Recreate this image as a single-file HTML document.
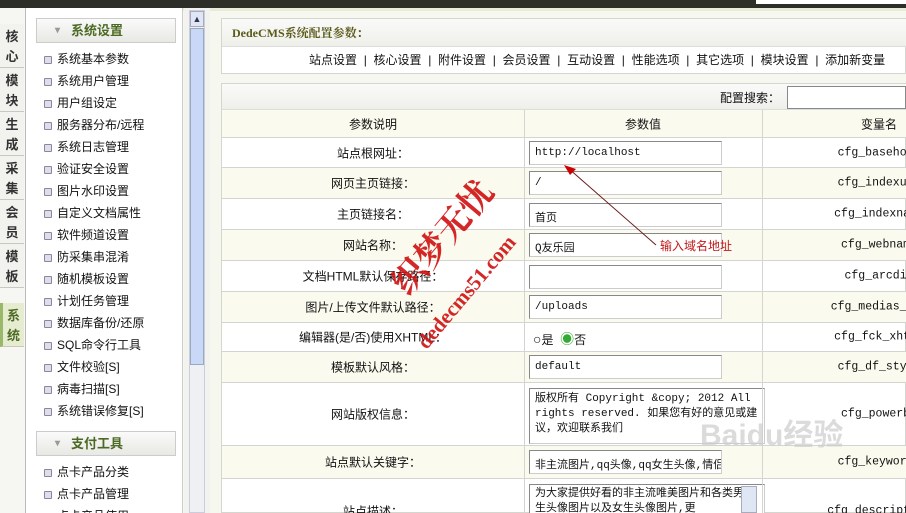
<!DOCTYPE html>
<html style="width:906px;height:513px;overflow:hidden"><head><meta charset="utf-8"><style>
*{margin:0;padding:0;box-sizing:border-box}
body{width:906px;height:513px;overflow:hidden;background:#f6f8f0;font-family:"Liberation Sans","Noto Sans CJK SC","WenQuanYi Zen Hei",sans-serif;font-size:12px;color:#111;position:relative}
.a{position:absolute}
.tab{position:absolute;left:0;width:24px;height:44px;background:#f2f2ee;border-bottom:1px solid #c8c8c0;font-weight:bold;font-size:13px;color:#333;text-align:center;line-height:20px;padding-top:3px}
.side{position:absolute;left:25px;top:8px;width:158px;height:505px;background:#fff;border-left:1px solid #bbb;border-right:1px solid #ccc;overflow:hidden}
.hd{position:absolute;left:10px;width:140px;height:25px;border:1px solid #ccc;background:linear-gradient(#fafafa,#e8e8e4);font-weight:bold;font-size:13px;color:#4c6a23;line-height:23px;padding-left:34px}
.hd:before{content:"▾";position:absolute;left:18px;color:#999;font-size:10px}
.it{position:absolute;left:18px;font-size:12px;line-height:22px;padding-left:13px;white-space:nowrap}
.it:before{content:"";position:absolute;left:0;top:8px;width:6px;height:6px;border:1px solid #889;background:#dde;border-radius:1px}
.row{position:absolute;left:222px;width:684px;border-bottom:1px solid #d4d4d0;overflow:hidden}
.c1{position:absolute;left:0;width:302px;text-align:center;top:50%;transform:translateY(-50%)}
.c3{position:absolute;left:540px;width:234px;text-align:center;top:50%;transform:translateY(-50%);font-family:"Liberation Mono",monospace;font-size:11.5px;white-space:nowrap}
.vl{position:absolute;top:110px;height:403px;width:1px;background:#d4d4d0}
.in{position:absolute;left:307px;width:193px;height:24px;border:1px solid #888;border-right-color:#ccc;border-bottom-color:#ccc;background:#fff;font-family:"Liberation Mono","Noto Sans CJK SC",monospace;font-size:11px;padding:5px 5px;white-space:nowrap;overflow:hidden}
.be{background:#fafaee}
.sp{display:inline-block;width:16.5px;text-align:center}
</style></head><body>
<div class="a" style="left:0;top:0;width:906px;height:8px;background:#2e2e28"></div>
<div class="a" style="left:756px;top:0;width:150px;height:4px;background:#fff"></div>
<div class="a" style="left:0;top:8px;width:906px;height:3px;background:#e6ecd8"></div>
<div class="a" style="left:0;top:8px;width:25px;height:505px;background:#f6f6f2"></div>
<div class="tab" style="top:24px">核<br>心</div>
<div class="tab" style="top:68px">模<br>块</div>
<div class="tab" style="top:112px">生<br>成</div>
<div class="tab" style="top:156px">采<br>集</div>
<div class="tab" style="top:200px">会<br>员</div>
<div class="tab" style="top:244px">模<br>板</div>
<div class="tab" style="top:303px;background:#e6ecd0;color:#4c6a23;border-left:3px solid #9ab86a">系<br>统</div>
<div class="side">
<div class="hd" style="top:10px">系统设置</div>
<div class="it" style="top:40px">系统基本参数</div>
<div class="it" style="top:62px">系统用户管理</div>
<div class="it" style="top:84px">用户组设定</div>
<div class="it" style="top:106px">服务器分布/远程</div>
<div class="it" style="top:128px">系统日志管理</div>
<div class="it" style="top:150px">验证安全设置</div>
<div class="it" style="top:172px">图片水印设置</div>
<div class="it" style="top:194px">自定义文档属性</div>
<div class="it" style="top:216px">软件频道设置</div>
<div class="it" style="top:238px">防采集串混淆</div>
<div class="it" style="top:260px">随机模板设置</div>
<div class="it" style="top:282px">计划任务管理</div>
<div class="it" style="top:304px">数据库备份/还原</div>
<div class="it" style="top:326px">SQL命令行工具</div>
<div class="it" style="top:348px">文件校验[S]</div>
<div class="it" style="top:370px">病毒扫描[S]</div>
<div class="it" style="top:392px">系统错误修复[S]</div>
<div class="hd" style="top:423px">支付工具</div>
<div class="it" style="top:453px">点卡产品分类</div>
<div class="it" style="top:475px">点卡产品管理</div>
<div class="it" style="top:497px">点卡产品使用</div>
</div>
<div class="a" style="left:184px;top:8px;width:26px;height:505px;background:#f2f2ee"></div>
<div class="a" style="left:189px;top:10px;width:16px;height:503px;background:#eef0f4;border:1px solid #ccd"></div>
<div class="a" style="left:190px;top:11px;width:14px;height:16px;background:#dfe6f4;border:1px solid #aab;font-size:9px;text-align:center;line-height:14px;color:#335">▲</div>
<div class="a" style="left:190px;top:28px;width:14px;height:337px;background:#c8d8f6;border:1px solid #9ab"></div>
<div class="a" style="left:221px;top:18px;width:685px;height:56px;border:1px solid #d6d6d0;background:#fff"></div>
<div class="a" style="left:222px;top:19px;width:684px;height:28px;background:linear-gradient(#fafafa,#efefea);border-bottom:1px solid #ddd;font-family:'Liberation Serif','Noto Serif CJK SC',serif;font-weight:bold;color:#5a5a1a;font-size:12px;line-height:28px;padding-left:10px">DedeCMS系统配置参数：</div>
<div class="a" style="left:309px;top:48px;font-size:12px;line-height:24px;white-space:nowrap">站点设置<span class="sp">|</span>核心设置<span class="sp">|</span>附件设置<span class="sp">|</span>会员设置<span class="sp">|</span>互动设置<span class="sp">|</span>性能选项<span class="sp">|</span>其它选项<span class="sp">|</span>模块设置<span class="sp">|</span>添加新变量</div>
<div class="a" style="left:221px;top:83px;width:685px;height:430px;border:1px solid #d6d6d0;background:#fff"></div>
<div class="a" style="left:222px;top:84px;width:684px;height:26px;background:linear-gradient(#fafafa,#efefea);border-bottom:1px solid #ddd"></div>
<div class="a" style="left:720px;top:89px;font-size:12px">配置搜索：</div>
<div class="a" style="left:787px;top:86px;width:119px;height:23px;border:1px solid #888;background:#fff"></div>
<div class="row be" style="top:110px;height:28px"><div class="c1">参数说明</div><div class="c1" style="left:302px;width:238px">参数值</div><div class="c3" style="font-family:inherit;font-size:12px">变量名</div></div>
<div class="row" style="top:138px;height:30px"><div class="c1">站点根网址：</div><div class="in" style="top:3px">http://localhost</div><div class="c3">cfg_basehost</div></div>
<div class="row be" style="top:168px;height:31px"><div class="c1">网页主页链接：</div><div class="in" style="top:3px">/</div><div class="c3">cfg_indexurl</div></div>
<div class="row" style="top:199px;height:31px"><div class="c1">主页链接名：</div><div class="in" style="top:4px">首页</div><div class="c3">cfg_indexname</div></div>
<div class="row be" style="top:230px;height:31px"><div class="c1">网站名称：</div><div class="in" style="top:3px">Q友乐园</div><div class="c3">cfg_webname</div></div>
<div class="row" style="top:261px;height:31px"><div class="c1">文档HTML默认保存路径：</div><div class="in" style="top:4px"></div><div class="c3">cfg_arcdir</div></div>
<div class="row be" style="top:292px;height:31px"><div class="c1">图片/上传文件默认路径：</div><div class="in" style="top:3px">/uploads</div><div class="c3">cfg_medias_dir</div></div>
<div class="row" style="top:323px;height:29px"><div class="c1">编辑器(是/否)使用XHTML：</div><div class="a" style="left:311px;top:6px;font-size:12px"><span style="font-size:14px">○</span>是 &nbsp;<span style="color:#3a3;font-size:14px">◉</span>否</div><div class="c3">cfg_fck_xhtml</div></div>
<div class="row be" style="top:352px;height:31px"><div class="c1">模板默认风格：</div><div class="in" style="top:3px">default</div><div class="c3">cfg_df_style</div></div>
<div class="row" style="top:383px;height:63px"><div class="c1">网站版权信息：</div><div class="in" style="top:5px;width:236px;height:56px;white-space:normal;line-height:15px;padding:3px 5px">版权所有 Copyright &amp;copy; 2012 All rights reserved. 如果您有好的意见或建议，欢迎联系我们</div><div class="c3">cfg_powerby</div></div>
<div class="row be" style="top:446px;height:33px"><div class="c1">站点默认关键字：</div><div class="in" style="top:4px">非主流图片,qq头像,qq女生头像,情侣</div><div class="c3">cfg_keywords</div></div>
<div class="row" style="top:479px;height:34px;border-bottom:none"><div class="c1" style="top:32px">站点描述：</div><div class="in" style="top:5px;width:236px;height:40px;white-space:normal;line-height:15px;padding:2px 20px 2px 5px">为大家提供好看的非主流唯美图片和各类男生头像图片以及女生头像图片,更</div><div class="c3" style="top:32px">cfg_description</div></div>
<div class="vl" style="left:524px"></div><div class="vl" style="left:762px"></div>
<div class="a" style="left:741px;top:486px;width:16px;height:27px;background:#dfe6f4;border:1px solid #aab"></div>
<svg class="a" style="left:560px;top:160px" width="120" height="100"><line x1="8" y1="8" x2="96" y2="85" stroke="#6a1a1a" stroke-width="1"/><polygon points="4,5 16,9 10,15" fill="#c00"/></svg>
<div class="a" style="left:660px;top:237px;color:#c01818;font-size:12px">输入域名地址</div>
<div class="a" style="left:378px;top:272px;transform:rotate(-50deg);transform-origin:left top;color:#d01010;font-family:'Liberation Serif','Noto Serif CJK SC',serif;font-weight:bold;font-size:34px;white-space:nowrap;opacity:.9">织梦无忧</div>
<div class="a" style="left:412px;top:338px;transform:rotate(-50deg);transform-origin:left top;color:#d01010;font-family:'Liberation Serif',serif;font-weight:bold;font-size:21px;white-space:nowrap;opacity:.9">dedecms51.com</div>
<div class="a" style="left:700px;top:410px;color:#ccc;font-size:30px;font-weight:bold;opacity:.7">Baidu经验</div>
</body></html>
